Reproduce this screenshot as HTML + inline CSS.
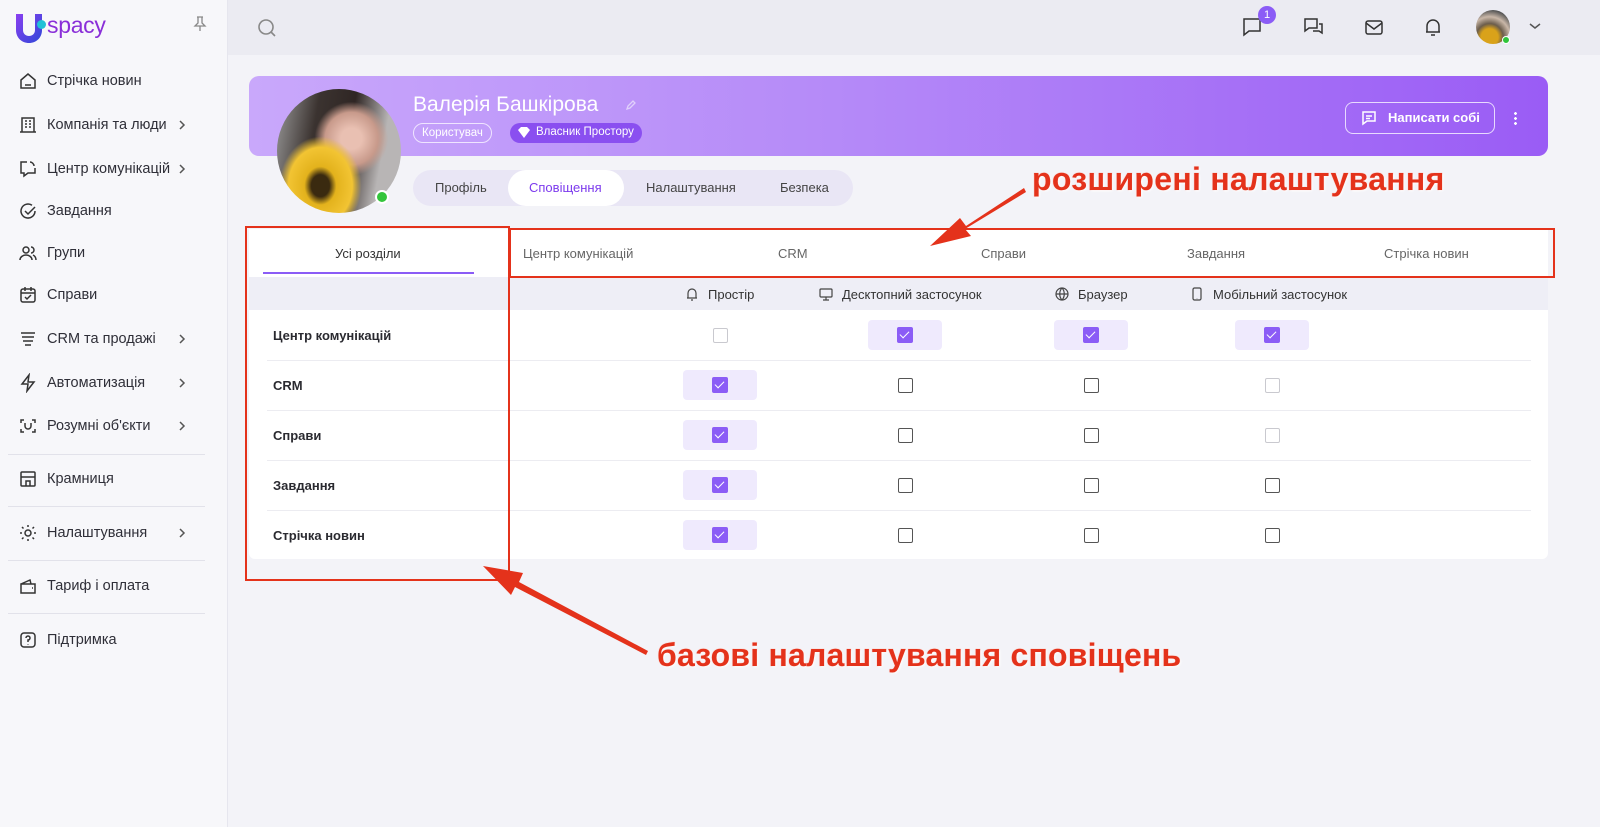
<!DOCTYPE html>
<html><head><meta charset="utf-8"><style>
*{box-sizing:border-box;margin:0;padding:0}
body{width:1600px;height:827px;overflow:hidden;background:#f3f3f8;font-family:"Liberation Sans","Noto Sans CJK SC",sans-serif;color:#2b2b33;position:relative}
.abs{position:absolute}
.side{left:0;top:0;width:228px;height:827px;background:#f7f7fa;border-right:1px solid #e6e6ee}
.nav{position:absolute;left:18px;font-size:14.5px;color:#2f2f38;display:flex;align-items:center;width:180px}
.nav svg{width:20px;height:20px;margin-right:9px;flex:none}
.nav .ch{position:absolute;right:0;top:3px;width:14px;height:14px}
.sep{position:absolute;left:8px;width:197px;height:1px;background:#e2e2ea}
.top{left:228px;top:0;width:1372px;height:55px;background:#ebebf2}
.ico{position:absolute;width:22px;height:22px}
.banner{left:249px;top:76px;width:1299px;height:80px;border-radius:10px;background:linear-gradient(90deg,#c9a8fb 0%,#b58af8 45%,#9a5cf5 100%)}
.badge{position:absolute;top:123px;height:20px;border-radius:10px;font-size:11.5px;line-height:18px;padding:0 8px;color:#fff}
.tabs{left:413px;top:170px;width:440px;height:36px;border-radius:18px;background:#e9e6f5}
.tab{position:absolute;top:180px;font-size:13px;color:#444}
.white{background:#fff}
.cb{position:absolute;width:15px;height:15px;border:1.6px solid #555;border-radius:2px;background:#fff}
.cb.l{border-color:#c9c9cf}
.cbw{position:absolute;width:74px;height:30px;background:#efeafd;border-radius:4px}
.cbw i{position:absolute;left:29px;top:7px;width:16px;height:16px;background:#8b5cf6;border-radius:2px}
.cbw i:after{content:"";position:absolute;left:5px;top:2px;width:4px;height:8px;border:solid #fff;border-width:0 1.6px 1.6px 0;transform:rotate(45deg)}
.rl{position:absolute;left:273px;font-size:13px;font-weight:bold;color:#2a2a30}
.hr{position:absolute;left:267px;width:1264px;height:1px;background:#ececf1}
.ann{position:absolute;color:#e4321b;font-weight:bold;font-size:32px;font-family:"Liberation Sans Narrow","Liberation Sans",sans-serif;text-shadow:0 0 2px #fff,1px 1px 2px #fff,0 0 1px #e4321b;white-space:nowrap}
.hd{position:absolute;top:286px;font-size:13px;color:#333;display:flex;align-items:center}
.hd svg{width:16px;height:16px;margin-right:8px}
</style></head><body>
<div class="abs side"></div>
<svg class="abs" style="left:14px;top:12px" width="30" height="32" viewBox="0 0 30 32"><defs><linearGradient id="g" x1="0" y1="0" x2="1" y2="1"><stop offset="0" stop-color="#8a3ff0"/><stop offset="1" stop-color="#2f48d8"/></linearGradient></defs><path d="M2 2h7v16c0 4 3 6 6 6s6-2 6-6V2h7v16c0 8-6 13-13 13S2 26 2 18z" fill="url(#g)"/></svg>
<div class="abs" style="left:37px;top:20px;width:9px;height:9px;border-radius:50%;background:#21c1d6"></div>
<div class="abs" style="left:47px;top:12px;font-size:23px;color:#8a2fd8;letter-spacing:-.3px">spacy</div>
<svg class="abs" style="left:193px;top:16px" width="14" height="16" viewBox="0 0 14 16" fill="none" stroke="#888" stroke-width="1.3"><path d="M4 1h6M5 1v6L2 10h10L9 7V1M7 10v5"/></svg>

<div class="nav" style="top:71px"><svg viewBox="0 0 20 20" fill="none" stroke="#333" stroke-width="1.5"><path d="M3 9l7-6 7 6v8H3z M7 14h6"/></svg>Стрічка новин</div>
<div class="nav" style="top:115px"><svg viewBox="0 0 20 20" fill="none" stroke="#333" stroke-width="1.5"><path d="M4 3h12v14H4zM2 17h16M7 6h2M11 6h2M7 9h2M11 9h2M7 12h2M11 12h2"/></svg>Компанія та люди<svg class="ch" viewBox="0 0 14 14" fill="none" stroke="#555" stroke-width="1.5"><path d="M5 3l4 4-4 4"/></svg></div>
<div class="nav" style="top:159px"><svg viewBox="0 0 20 20" fill="none" stroke="#333" stroke-width="1.5"><path d="M9 3H3v11h3v3l4-3h7V9M12 3c2 0 4 2 4 4"/></svg>Центр комунікацій<svg class="ch" viewBox="0 0 14 14" fill="none" stroke="#555" stroke-width="1.5"><path d="M5 3l4 4-4 4"/></svg></div>
<div class="nav" style="top:201px"><svg viewBox="0 0 20 20" fill="none" stroke="#333" stroke-width="1.5"><path d="M17 10a7 7 0 1 1-3-5.7M7 10l3 3 7-7"/></svg>Завдання</div>
<div class="nav" style="top:243px"><svg viewBox="0 0 20 20" fill="none" stroke="#333" stroke-width="1.5"><circle cx="8" cy="7" r="3"/><path d="M2 17c0-3 3-5 6-5s6 2 6 5M13 4a3 3 0 0 1 0 6M15 12c2 1 3 3 3 5"/></svg>Групи</div>
<div class="nav" style="top:285px"><svg viewBox="0 0 20 20" fill="none" stroke="#333" stroke-width="1.5"><rect x="3" y="4" width="14" height="13" rx="2"/><path d="M3 8h14M7 2v4M13 2v4M7 12l2 2 4-4"/></svg>Справи</div>
<div class="nav" style="top:329px"><svg viewBox="0 0 20 20" fill="none" stroke="#333" stroke-width="1.5"><path d="M3 4h14M4 8h12M5 12h10M7 16h6"/></svg>CRM та продажі<svg class="ch" viewBox="0 0 14 14" fill="none" stroke="#555" stroke-width="1.5"><path d="M5 3l4 4-4 4"/></svg></div>
<div class="nav" style="top:373px"><svg viewBox="0 0 20 20" fill="none" stroke="#333" stroke-width="1.5"><path d="M11 2L4 11h6l-1 7 7-9h-6z"/></svg>Автоматизація<svg class="ch" viewBox="0 0 14 14" fill="none" stroke="#555" stroke-width="1.5"><path d="M5 3l4 4-4 4"/></svg></div>
<div class="nav" style="top:416px"><svg viewBox="0 0 20 20" fill="none" stroke="#333" stroke-width="1.5"><path d="M3 7V4h3M14 4h3v3M17 13v3h-3M6 16H3v-3M7 7v3a3 3 0 0 0 6 0V7"/></svg>Розумні об'єкти<svg class="ch" viewBox="0 0 14 14" fill="none" stroke="#555" stroke-width="1.5"><path d="M5 3l4 4-4 4"/></svg></div>
<div class="sep" style="top:454px"></div>
<div class="nav" style="top:469px"><svg viewBox="0 0 20 20" fill="none" stroke="#333" stroke-width="1.5"><rect x="3" y="3" width="14" height="14" rx="1"/><path d="M3 8h14M8 17v-5h4v5"/></svg>Крамниця</div>
<div class="sep" style="top:506px"></div>
<div class="nav" style="top:523px"><svg viewBox="0 0 20 20" fill="none" stroke="#333" stroke-width="1.5"><circle cx="10" cy="10" r="3"/><path d="M10 2v2M10 16v2M2 10h2M16 10h2M4 4l1.5 1.5M14.5 14.5L16 16M4 16l1.5-1.5M14.5 5.5L16 4"/></svg>Налаштування<svg class="ch" viewBox="0 0 14 14" fill="none" stroke="#555" stroke-width="1.5"><path d="M5 3l4 4-4 4"/></svg></div>
<div class="sep" style="top:560px"></div>
<div class="nav" style="top:576px"><svg viewBox="0 0 20 20" fill="none" stroke="#333" stroke-width="1.5"><path d="M3 8h14v9H3zM3 8l9-4 1 4M14 12h1"/></svg>Тариф і оплата</div>
<div class="sep" style="top:613px"></div>
<div class="nav" style="top:630px"><svg viewBox="0 0 20 20" fill="none" stroke="#333" stroke-width="1.5"><rect x="3" y="3" width="14" height="14" rx="3"/><path d="M8 8a2 2 0 1 1 2 2v2M10 14v.5"/></svg>Підтримка</div>

<div class="abs top"></div>
<svg class="ico" style="left:256px;top:17px" viewBox="0 0 22 22" fill="none" stroke="#888" stroke-width="1.6"><circle cx="10" cy="10" r="7"/><path d="M15 15l4 4"/></svg>
<svg class="ico" style="left:1241px;top:16px" viewBox="0 0 22 22" fill="none" stroke="#333" stroke-width="1.5"><path d="M3 3h16v12H8l-5 4z"/></svg>
<div class="abs" style="left:1258px;top:6px;width:18px;height:18px;border-radius:50%;background:#8b5cf6;color:#fff;font-size:11px;text-align:center;line-height:18px">1</div>
<svg class="ico" style="left:1302px;top:16px" viewBox="0 0 22 22" fill="none" stroke="#333" stroke-width="1.5"><path d="M3 3h12v9H7l-4 3zM17 8h3v9l-3-2h-6"/></svg>
<svg class="ico" style="left:1363px;top:17px" viewBox="0 0 22 22" fill="none" stroke="#333" stroke-width="1.5"><rect x="3" y="4" width="16" height="13" rx="2"/><path d="M3 6l8 6 8-6"/></svg>
<svg class="ico" style="left:1422px;top:16px" viewBox="0 0 22 22" fill="none" stroke="#333" stroke-width="1.5"><path d="M5 16V10a6 6 0 0 1 12 0v6H4h14M9 19h4"/></svg>
<div class="abs" style="left:1476px;top:10px;width:34px;height:34px;border-radius:50%;background:radial-gradient(circle at 40% 80%,#d9a21a 25%,#6b5d4c 40%,#c9b7a8 60%,#545454 80%)"></div>
<div class="abs" style="left:1502px;top:36px;width:8px;height:8px;border-radius:50%;background:#2fc53a;border:1px solid #fff"></div>
<svg class="abs" style="left:1528px;top:21px" width="14" height="10" viewBox="0 0 14 10" fill="none" stroke="#555" stroke-width="1.5"><path d="M2 3l5 4 5-4"/></svg>

<div class="abs banner"></div>
<div class="abs" style="left:413px;top:93px;font-size:21px;color:#fff">Валерія Башкірова</div>
<svg class="abs" style="left:625px;top:99px" width="12" height="12" viewBox="0 0 12 12" fill="none" stroke="#e0d0fb" stroke-width="1.3"><path d="M2 10l1-3 5-5 2 2-5 5z"/></svg>
<div class="badge" style="left:413px;border:1px solid #efe4ff">Користувач</div>
<div class="badge" style="left:510px;background:#8a4ff0;padding-left:26px">Власник Простору</div>
<svg class="abs" style="left:518px;top:127px" width="12" height="11" viewBox="0 0 12 11" fill="#fff"><path d="M3 0h6l3 3-6 8-6-8z"/></svg>
<div class="abs" style="left:1345px;top:102px;width:150px;height:32px;border:1px solid #e8dafe;border-radius:8px;color:#fff;font-size:13px;font-weight:bold;line-height:30px;padding-left:42px">Написати собі</div>
<svg class="abs" style="left:1361px;top:110px" width="16" height="16" viewBox="0 0 16 16" fill="none" stroke="#fff" stroke-width="1.5"><path d="M2 2h12v9H6l-4 3zM5 6h6M5 8.5h4"/></svg>
<div class="abs" style="left:1514px;top:111px;width:3px;height:14px;background:radial-gradient(circle,#fff 1.3px,transparent 1.5px) 0 0/3px 5px"></div>

<div class="abs" style="left:277px;top:89px;width:124px;height:124px;border-radius:50%;background:radial-gradient(ellipse at 35% 78%,#3a2a10 8%,#e3b21c 14%,#f2c433 28%,transparent 36%),radial-gradient(ellipse at 60% 40%,#e9c0b2 10%,#c89a8b 25%,transparent 35%),linear-gradient(100deg,#9a9a9a 0%,#3b3330 30%,#2f2624 55%,#b8b5b5 80%)"></div>
<div class="abs" style="left:375px;top:190px;width:14px;height:14px;border-radius:50%;background:#34c53c;border:2px solid #fff"></div>

<div class="abs tabs"></div>
<div class="abs" style="left:508px;top:170px;width:116px;height:36px;border-radius:18px;background:#fff"></div>
<div class="tab" style="left:435px">Профіль</div>
<div class="tab" style="left:529px;color:#7c3aed">Сповіщення</div>
<div class="tab" style="left:646px">Налаштування</div>
<div class="tab" style="left:780px">Безпека</div>

<div class="abs white" style="left:249px;top:229px;width:1299px;height:48px"></div>
<div class="abs" style="left:335px;top:246px;font-size:13px;color:#333">Усі розділи</div>
<div class="abs" style="left:263px;top:272px;width:211px;height:2px;background:#8b5cf6"></div>
<div class="abs" style="left:523px;top:246px;font-size:13px;color:#666">Центр комунікацій</div>
<div class="abs" style="left:778px;top:246px;font-size:13px;color:#666">CRM</div>
<div class="abs" style="left:981px;top:246px;font-size:13px;color:#666">Справи</div>
<div class="abs" style="left:1187px;top:246px;font-size:13px;color:#666">Завдання</div>
<div class="abs" style="left:1384px;top:246px;font-size:13px;color:#666">Стрічка новин</div>

<div class="abs" style="left:249px;top:277px;width:1299px;height:33px;background:#eeeef6"></div>
<div class="hd" style="left:684px"><svg viewBox="0 0 16 16" fill="none" stroke="#444" stroke-width="1.2"><path d="M4 12V7a4 4 0 0 1 8 0v5H3h10M7 14h2"/></svg>Простір</div>
<div class="hd" style="left:818px"><svg viewBox="0 0 16 16" fill="none" stroke="#444" stroke-width="1.2"><rect x="2" y="3" width="12" height="8" rx="1"/><path d="M8 11v3M5 14h6"/></svg>Десктопний застосунок</div>
<div class="hd" style="left:1054px"><svg viewBox="0 0 16 16" fill="none" stroke="#444" stroke-width="1.2"><circle cx="8" cy="8" r="6"/><path d="M2 8h12M8 2c-3 3-3 9 0 12M8 2c3 3 3 9 0 12"/></svg>Браузер</div>
<div class="hd" style="left:1189px"><svg viewBox="0 0 16 16" fill="none" stroke="#444" stroke-width="1.2"><rect x="4" y="2" width="8" height="12" rx="1.5"/><path d="M8 12v.3"/></svg>Мобільний застосунок</div>

<div class="abs white" style="left:249px;top:310px;width:1299px;height:249px;border-radius:0 0 6px 6px"></div>
<div class="rl" style="top:328px">Центр комунікацій</div>
<div class="rl" style="top:378px">CRM</div>
<div class="rl" style="top:428px">Справи</div>
<div class="rl" style="top:478px">Завдання</div>
<div class="rl" style="top:528px">Стрічка новин</div>
<div class="hr" style="top:360px"></div><div class="hr" style="top:410px"></div><div class="hr" style="top:460px"></div><div class="hr" style="top:510px"></div>

<div class="cb l" style="left:713px;top:328px"></div>
<div class="cbw" style="left:868px;top:320px"><i></i></div>
<div class="cbw" style="left:1054px;top:320px"><i></i></div>
<div class="cbw" style="left:1235px;top:320px"><i></i></div>
<div class="cbw" style="left:683px;top:370px"><i></i></div>
<div class="cbw" style="left:683px;top:420px"><i></i></div>
<div class="cbw" style="left:683px;top:470px"><i></i></div>
<div class="cbw" style="left:683px;top:520px"><i></i></div>
<div class="cb" style="left:898px;top:378px"></div><div class="cb" style="left:1084px;top:378px"></div><div class="cb l" style="left:1265px;top:378px"></div>
<div class="cb" style="left:898px;top:428px"></div><div class="cb" style="left:1084px;top:428px"></div><div class="cb l" style="left:1265px;top:428px"></div>
<div class="cb" style="left:898px;top:478px"></div><div class="cb" style="left:1084px;top:478px"></div><div class="cb" style="left:1265px;top:478px"></div>
<div class="cb" style="left:898px;top:528px"></div><div class="cb" style="left:1084px;top:528px"></div><div class="cb" style="left:1265px;top:528px"></div>

<div class="abs" style="left:245px;top:226px;width:265px;height:355px;border:2px solid #e4321b"></div>
<div class="abs" style="left:509px;top:228px;width:1046px;height:50px;border:2px solid #e4321b"></div>
<div class="ann" style="left:1032px;top:161px;letter-spacing:0.3px">розширені налаштування</div>
<div class="ann" style="left:657px;top:637px;letter-spacing:0.2px">базові налаштування сповіщень</div>
<svg class="abs" style="left:0;top:0" width="1600" height="827" viewBox="0 0 1600 827"><g fill="#e4321b">
<path d="M1024 188L966 226 960 218 930 246 971 236 965 229 1026 192z"/>
<path d="M648 651L519 582 523 573 483 566 511 595 515 587 646 655z"/>
</g></svg>
</body></html>
